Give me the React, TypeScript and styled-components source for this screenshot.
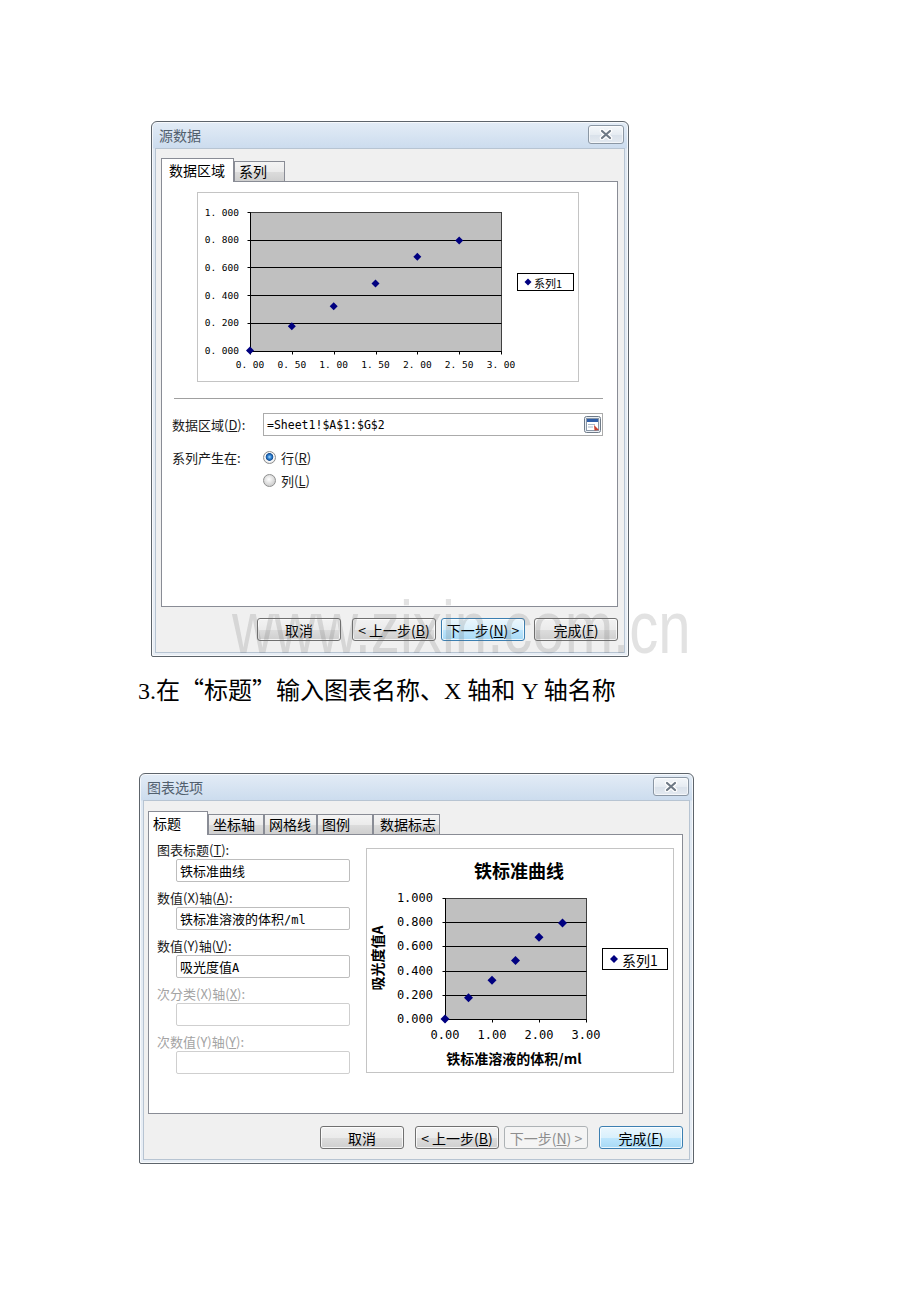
import React from "react";
import styled, { createGlobalStyle, css } from "styled-components";

const CJK = `"Noto Sans CJK SC", "Liberation Sans", sans-serif`;
const MONO = `"DejaVu Sans Mono", "Liberation Mono", monospace`;

const GlobalStyle = createGlobalStyle`
  html, body { margin: 0; padding: 0; background: #ffffff; }
  body { font-family: ${CJK}; color: #000; }
  *, *::before, *::after { box-sizing: border-box; }
`;

/* ---------- page ---------- */

const Page = styled.main`
  position: relative;
  width: 920px;
  height: 1302px;
  padding-top: 121px;
  overflow: hidden;
`;

const Caption = styled.p`
  margin: 16px 0 0 138px;
  font-family: "Liberation Serif", "Noto Sans CJK SC", serif;
  font-size: 24px;
  line-height: 32px;
  white-space: nowrap;
  color: #000;
`;

const Quote = styled.span`
  font-family: "Noto Sans CJK SC", sans-serif;
  font-feature-settings: "fwid";
`;

const Watermark = styled.div`
  position: absolute;
  left: 232px;
  top: 590px;
  font-family: "Liberation Sans", sans-serif;
  font-size: 75px;
  line-height: 1;
  white-space: nowrap;
  color: rgba(110, 110, 110, 0.2);
  transform: scaleX(0.775);
  transform-origin: left top;
  pointer-events: none;
`;

/* ---------- window chrome ---------- */

const Window = styled.section<{ $x: number; $w: number; $h: number }>`
  margin-left: ${(p) => p.$x}px;
  width: ${(p) => p.$w}px;
  height: ${(p) => p.$h}px;
  display: flex;
  flex-direction: column;
  padding: 0 3px 3px;
  border: 1px solid #5d646b;
  border-radius: 6px 6px 2px 2px;
  background: linear-gradient(180deg, #e3ecf6 0px, #ccdcee 26px, #dfe8f2 27px, #e8eef5 100%);
  box-shadow: inset 0 0 0 1px rgba(255, 255, 255, 0.7);
`;

const TitleBar = styled.header`
  height: 26px;
  flex: none;
  display: flex;
  align-items: center;
  justify-content: space-between;
  padding: 0 1px 1px 4px;
`;

const WindowTitle = styled.h1`
  margin: 0;
  font-size: 14px;
  font-weight: normal;
  line-height: 18px;
  color: #52606e;
`;

const CloseButton = styled.button`
  width: 36px;
  height: 19px;
  padding: 0;
  display: flex;
  align-items: center;
  justify-content: center;
  border: 1px solid #8b97a4;
  border-radius: 3px;
  background: linear-gradient(180deg, #f4f7fa 0%, #e6ecf2 50%, #d9e1ea 51%, #e3e9f0 100%);
  box-shadow: inset 0 0 0 1px rgba(255, 255, 255, 0.6);
`;

const CloseGlyph = () => (
  <svg width="16" height="11" viewBox="0 0 16 11">
    <path d="M4 2 L12 9 M12 2 L4 9" stroke="#ffffff" strokeWidth="4.5" strokeLinecap="round" />
    <path d="M4 2 L12 9 M12 2 L4 9" stroke="#6e7985" strokeWidth="2.2" strokeLinecap="round" />
  </svg>
);

const Body = styled.div<{ $pad: string }>`
  flex: 1;
  display: flex;
  flex-direction: column;
  padding: ${(p) => p.$pad};
  background: #f0f0f0;
  border: 1px solid #b7c4d2;
`;

/* ---------- tabs ---------- */

const TabStrip = styled.div`
  position: relative;
  z-index: 1;
  height: 24px;
  margin-bottom: -1px;
  display: flex;
  align-items: flex-end;
`;

const Tab = styled.div<{ $active?: boolean; $w: number; $pl: number }>`
  width: ${(p) => p.$w}px;
  padding-left: ${(p) => p.$pl}px;
  font-size: 14px;
  color: #000;
  border: 1px solid #898c95;
  ${(p) =>
    p.$active
      ? css`
          height: 24px;
          line-height: 22px;
          background: #ffffff;
          border-bottom: none;
        `
      : css`
          height: 21px;
          line-height: 19px;
          background: linear-gradient(180deg, #f4f4f4 0%, #ebebeb 50%, #dcdcdc 51%, #cfcfcf 100%);
        `}
`;

const Panel = styled.div<{ $h: number }>`
  height: ${(p) => p.$h}px;
  flex: none;
  display: flex;
  background: #ffffff;
  border: 1px solid #898c95;
`;

/* ---------- buttons ---------- */

type ButtonKind = "normal" | "focus" | "disabled";

const ButtonRow = styled.div<{ $mt: number }>`
  margin-top: ${(p) => p.$mt}px;
  display: flex;
  justify-content: flex-end;
`;

const Button = styled.button<{ $kind?: ButtonKind; $gap?: number }>`
  width: 84px;
  height: 23px;
  margin-left: ${(p) => p.$gap ?? 0}px;
  padding: 0;
  font-family: ${CJK};
  font-size: 14px;
  line-height: 20px;
  white-space: nowrap;
  border-radius: 3px;
  color: #000;
  border: 1px solid #707070;
  background: linear-gradient(180deg, #f2f2f2 0%, #ebebeb 50%, #dddddd 51%, #cfcfcf 100%);
  box-shadow: inset 0 0 0 1px rgba(255, 255, 255, 0.75);
  ${(p) =>
    p.$kind === "focus" &&
    css`
      border-color: #3c7fb1;
      background: linear-gradient(180deg, #eaf6fd 0%, #d9f0fc 50%, #bee6fd 51%, #a7d9f5 100%);
    `}
  ${(p) =>
    p.$kind === "disabled" &&
    css`
      color: #8d8d8d;
      border-color: #adb2b5;
      background: #f4f4f4;
      box-shadow: none;
    `}
`;

const Key = styled.span`
  text-decoration: underline;
`;

/* ---------- scatter chart ---------- */

type TextSpec = { text: string; x: number; y: number; size: number };

interface ChartSpec {
  width: number;
  height: number;
  plot: { x: number; y: number; w: number; h: number };
  xMax: number;
  xStep: number;
  tickSize: number;
  yLabelRight: number;
  xLabelMid: number;
  fmtY: (v: number) => string;
  fmtX: (v: number) => string;
  marker: number;
  legend: { x: number; y: number; w: number; h: number; size: number; dotX: number; textX: number };
  title?: TextSpec;
  xTitle?: TextSpec;
  yTitle?: TextSpec;
}

const SAMPLES: [number, number][] = [
  [0, 0],
  [0.5, 0.175],
  [1, 0.32],
  [1.5, 0.484],
  [2, 0.676],
  [2.5, 0.794],
];

const diamond = (cx: number, cy: number, r: number) =>
  `M${cx} ${cy - r} L${cx + r} ${cy} L${cx} ${cy + r} L${cx - r} ${cy} Z`;

const ChartFrame = styled.div<{ $w: number; $h: number }>`
  flex: none;
  width: ${(p) => p.$w}px;
  height: ${(p) => p.$h}px;
  background: #ffffff;
  & > svg {
    display: block;
  }
`;

function ScatterChart({ spec }: { spec: ChartSpec }) {
  const { plot } = spec;
  const crisp = (n: number) => Math.round(n) + 0.5;
  const sx = (v: number) => plot.x + (v / spec.xMax) * plot.w;
  const sy = (v: number) => plot.y + (1 - v) * plot.h;
  const yTicks = [0, 0.2, 0.4, 0.6, 0.8, 1];
  const xTicks = Array.from({ length: Math.round(spec.xMax / spec.xStep) + 1 }, (_, i) => i * spec.xStep);
  const left = crisp(plot.x);
  const right = crisp(plot.x + plot.w);
  const top = crisp(plot.y);
  const bottom = crisp(plot.y + plot.h);
  const lg = spec.legend;

  return (
    <ChartFrame $w={spec.width} $h={spec.height}>
      <svg width={spec.width} height={spec.height} viewBox={`0 0 ${spec.width} ${spec.height}`}>
        <rect x="0.5" y="0.5" width={spec.width - 1} height={spec.height - 1} fill="#fff" stroke="#c4c4c4" />
        {spec.title && (
          <text
            x={spec.title.x}
            y={spec.title.y}
            textAnchor="middle"
            fontSize={spec.title.size}
            fontWeight="bold"
            fontFamily={CJK}
          >
            {spec.title.text}
          </text>
        )}
        <rect x={left} y={top} width={right - left} height={bottom - top} fill="#c0c0c0" stroke="#404040" />
        {yTicks.slice(1, -1).map((v) => (
          <line key={`g${v}`} x1={left} x2={right} y1={crisp(sy(v))} y2={crisp(sy(v))} stroke="#000" />
        ))}
        <line x1={left} x2={left} y1={top} y2={bottom} stroke="#000" />
        <line x1={left} x2={right} y1={bottom} y2={bottom} stroke="#000" />
        {yTicks.map((v) => (
          <line key={`yt${v}`} x1={left - 3} x2={left} y1={crisp(sy(v))} y2={crisp(sy(v))} stroke="#000" />
        ))}
        {xTicks.map((v) => (
          <line key={`xt${v}`} x1={crisp(sx(v))} x2={crisp(sx(v))} y1={bottom} y2={bottom + 3} stroke="#000" />
        ))}
        {yTicks.map((v) => (
          <text
            key={`yl${v}`}
            x={spec.yLabelRight}
            y={sy(v)}
            textAnchor="end"
            dominantBaseline="central"
            fontSize={spec.tickSize}
            fontFamily={MONO}
            fill="#000"
          >
            {spec.fmtY(v)}
          </text>
        ))}
        {xTicks.map((v) => (
          <text
            key={`xl${v}`}
            x={sx(v)}
            y={spec.xLabelMid}
            textAnchor="middle"
            dominantBaseline="central"
            fontSize={spec.tickSize}
            fontFamily={MONO}
            fill="#000"
          >
            {spec.fmtX(v)}
          </text>
        ))}
        {SAMPLES.map(([x, y]) => (
          <path key={`p${x}`} d={diamond(sx(x), sy(y), spec.marker)} fill="#000080" />
        ))}
        {spec.xTitle && (
          <text
            x={spec.xTitle.x}
            y={spec.xTitle.y}
            textAnchor="middle"
            fontSize={spec.xTitle.size}
            fontWeight="bold"
            fontFamily={CJK}
          >
            {spec.xTitle.text}
          </text>
        )}
        {spec.yTitle && (
          <text
            transform={`translate(${spec.yTitle.x} ${spec.yTitle.y}) rotate(-90)`}
            textAnchor="middle"
            fontSize={spec.yTitle.size}
            fontWeight="bold"
            fontFamily={CJK}
          >
            {spec.yTitle.text}
          </text>
        )}
        <rect x={lg.x + 0.5} y={lg.y + 0.5} width={lg.w} height={lg.h} fill="#fff" stroke="#000" />
        <path d={diamond(lg.dotX, lg.y + lg.h / 2 + 0.5, spec.marker - 0.5)} fill="#000080" />
        <text
          x={lg.textX}
          y={lg.y + lg.h / 2 + 1}
          dominantBaseline="central"
          fontSize={lg.size}
          fontFamily={CJK}
          fill="#000"
        >
          系列1
        </text>
      </svg>
    </ChartFrame>
  );
}

const sourceChart: ChartSpec = {
  width: 382,
  height: 190,
  plot: { x: 53, y: 20, w: 251, h: 138.5 },
  xMax: 3,
  xStep: 0.5,
  tickSize: 9.5,
  yLabelRight: 42,
  xLabelMid: 172,
  fmtY: (v) => v.toFixed(3).replace(".", ". "),
  fmtX: (v) => v.toFixed(2).replace(".", ". "),
  marker: 4,
  legend: { x: 320, y: 81, w: 56, h: 17, size: 11, dotX: 331, textX: 337 },
};

const optionsChart: ChartSpec = {
  width: 308,
  height: 225,
  plot: { x: 79, y: 50, w: 141, h: 121 },
  xMax: 3,
  xStep: 1,
  tickSize: 12,
  yLabelRight: 67,
  xLabelMid: 187,
  fmtY: (v) => v.toFixed(3),
  fmtX: (v) => v.toFixed(2),
  marker: 4.5,
  legend: { x: 236, y: 100, w: 65, h: 21, size: 14, dotX: 248, textX: 256 },
  title: { text: "铁标准曲线", x: 153, y: 30, size: 18 },
  xTitle: { text: "铁标准溶液的体积/ml", x: 148, y: 216, size: 14 },
  yTitle: { text: "吸光度值A", x: 17, y: 110, size: 14 },
};

/* ---------- source data pane ---------- */

const SourcePane = styled.div`
  flex: 1;
  display: flex;
  flex-direction: column;
  padding: 10px 0 0 0;
`;

const SourcePreview = styled.div`
  margin-left: 35px;
`;

const Rule = styled.hr`
  height: 0;
  margin: 16px 14px 0 12px;
  border: 0;
  border-top: 1px solid #a0a0a0;
  border-bottom: 1px solid #ffffff;
`;

const FieldRow = styled.div`
  margin-top: 13px;
  padding: 0 14px 0 10px;
  display: flex;
  align-items: center;
`;

const FieldLabel = styled.span`
  width: 91px;
  flex: none;
  font-size: 13px;
  line-height: 23px;
  white-space: nowrap;
  color: #1a1a1a;
`;

const RangeInput = styled.div`
  flex: 1;
  height: 23px;
  display: flex;
  align-items: center;
  justify-content: space-between;
  padding: 0 1px 0 3px;
  border: 1px solid #ababab;
  background: #fff;
  font-family: ${MONO};
  font-size: 11.5px;
  color: #000;
`;

const RangeIcon = () => (
  <svg width="17" height="17" viewBox="0 0 17 17">
    <rect x="0.5" y="0.5" width="16" height="16" rx="2" fill="#e9eef4" stroke="#6f7b88" />
    <rect x="2.5" y="2.5" width="12" height="12" fill="#ffffff" stroke="#8a98a8" />
    <rect x="3" y="3" width="11" height="3" fill="#2f5ea8" />
    <path d="M4 8.5 H11 M4 11 H9" stroke="#a9b8c9" />
    <path d="M10 9 L15 14 L10.5 14.5 Z" fill="#c8402e" />
  </svg>
);

const OptionRow = styled.div`
  margin-top: 10px;
  padding-left: 10px;
  display: flex;
  align-items: flex-start;
`;

const RadioList = styled.div`
  display: flex;
  flex-direction: column;
`;

const RadioItem = styled.label`
  height: 23px;
  display: flex;
  align-items: center;
  gap: 5px;
  font-size: 13px;
  color: #1a1a1a;
`;

const RadioDot = styled.span<{ $on?: boolean }>`
  width: 13px;
  height: 13px;
  border-radius: 50%;
  border: 1px solid #8e8f8f;
  background: ${(p) =>
    p.$on
      ? "radial-gradient(circle at 50% 45%, #a9dcff 0px, #2d7fd0 2px, #174f92 3.5px, #ffffff 4.2px, #e6e6e6 6px)"
      : "radial-gradient(circle at 45% 40%, #ffffff 0px, #f0f0f0 2px, #d2d2d2 6px)"};
`;

/* ---------- chart options pane ---------- */

const OptionsPane = styled.div`
  flex: 1;
  display: flex;
  padding: 7px 0 0 8px;
`;

const TitleFields = styled.div`
  width: 209px;
  flex: none;
  display: flex;
  flex-direction: column;
`;

const FieldGroup = styled.div`
  margin-bottom: 8px;
`;

const GroupLabel = styled.div<{ $disabled?: boolean }>`
  height: 16px;
  margin-bottom: 1px;
  font-size: 13px;
  line-height: 16px;
  white-space: nowrap;
  color: ${(p) => (p.$disabled ? "#a3a3a3" : "#1a1a1a")};
`;

const TextBox = styled.div<{ $disabled?: boolean }>`
  width: 174px;
  height: 23px;
  margin-left: 19px;
  padding-left: 3px;
  font-size: 13px;
  line-height: 21px;
  white-space: nowrap;
  color: #000;
  background: #fff;
  border: 1px solid ${(p) => (p.$disabled ? "#cfcfcf" : "#bdbdbd")};
  border-radius: 2px;
`;

const MonoBit = styled.span`
  font-family: ${MONO};
  font-size: 12px;
`;

const OptionsPreview = styled.div`
  margin-top: 6px;
`;

type FieldDef = { label: React.ReactNode; value?: React.ReactNode; disabled?: boolean };

const titleFields: FieldDef[] = [
  { label: <>图表标题(<Key>T</Key>):</>, value: "铁标准曲线" },
  { label: <>数值(X)轴(<Key>A</Key>):</>, value: <>铁标准溶液的体积<MonoBit>/ml</MonoBit></> },
  { label: <>数值(Y)轴(<Key>V</Key>):</>, value: <>吸光度值<MonoBit>A</MonoBit></> },
  { label: <>次分类(X)轴(<Key>X</Key>):</>, disabled: true },
  { label: <>次数值(Y)轴(<Key>Y</Key>):</>, disabled: true },
];

export default function App() {
  return (
    <>
      <GlobalStyle />
      <Page>
        <Window $x={151} $w={478} $h={536}>
          <TitleBar>
            <WindowTitle>源数据</WindowTitle>
            <CloseButton aria-label="关闭">
              <CloseGlyph />
            </CloseButton>
          </TitleBar>
          <Body $pad="9px 6px 0 5px">
            <TabStrip>
              <Tab $active $w={73} $pl={7}>数据区域</Tab>
              <Tab $w={51} $pl={4}>系列</Tab>
            </TabStrip>
            <Panel $h={426}>
              <SourcePane>
                <SourcePreview>
                  <ScatterChart spec={sourceChart} />
                </SourcePreview>
                <Rule />
                <FieldRow>
                  <FieldLabel>
                    数据区域(<Key>D</Key>):
                  </FieldLabel>
                  <RangeInput>
                    <span>=Sheet1!$A$1:$G$2</span>
                    <RangeIcon />
                  </RangeInput>
                </FieldRow>
                <OptionRow>
                  <FieldLabel>系列产生在:</FieldLabel>
                  <RadioList>
                    <RadioItem>
                      <RadioDot $on />
                      <span>
                        行(<Key>R</Key>)
                      </span>
                    </RadioItem>
                    <RadioItem>
                      <RadioDot />
                      <span>
                        列(<Key>L</Key>)
                      </span>
                    </RadioItem>
                  </RadioList>
                </OptionRow>
              </SourcePane>
            </Panel>
            <ButtonRow $mt={11}>
              <Button>取消</Button>
              <Button $gap={11}>&lt; 上一步(<Key>B</Key>)</Button>
              <Button $gap={5} $kind="focus">下一步(<Key>N</Key>) &gt;</Button>
              <Button $gap={9}>完成(<Key>F</Key>)</Button>
            </ButtonRow>
          </Body>
        </Window>

        <Caption>
          3.在<Quote>“</Quote>标题<Quote>”</Quote>输入图表名称、X 轴和 Y 轴名称
        </Caption>

        <Window $x={139} $w={555} $h={391} style={{ marginTop: 66 }}>
          <TitleBar>
            <WindowTitle>图表选项</WindowTitle>
            <CloseButton aria-label="关闭">
              <CloseGlyph />
            </CloseButton>
          </TitleBar>
          <Body $pad="10px 6px 0 4px">
            <TabStrip>
              <Tab $active $w={60} $pl={4}>标题</Tab>
              <Tab $w={56} $pl={4}>坐标轴</Tab>
              <Tab $w={53} $pl={4}>网格线</Tab>
              <Tab $w={56} $pl={4}>图例</Tab>
              <Tab $w={67} $pl={6}>数据标志</Tab>
            </TabStrip>
            <Panel $h={280}>
              <OptionsPane>
                <TitleFields>
                  {titleFields.map((f, i) => (
                    <FieldGroup key={i}>
                      <GroupLabel $disabled={f.disabled}>{f.label}</GroupLabel>
                      <TextBox $disabled={f.disabled}>{f.value}</TextBox>
                    </FieldGroup>
                  ))}
                </TitleFields>
                <OptionsPreview>
                  <ScatterChart spec={optionsChart} />
                </OptionsPreview>
              </OptionsPane>
            </Panel>
            <ButtonRow $mt={12}>
              <Button>取消</Button>
              <Button $gap={11}>&lt; 上一步(<Key>B</Key>)</Button>
              <Button $gap={5} $kind="disabled">下一步(<Key>N</Key>) &gt;</Button>
              <Button $gap={11} $kind="focus">完成(<Key>F</Key>)</Button>
            </ButtonRow>
          </Body>
        </Window>

        <Watermark aria-hidden="true">www.zixin.com.cn</Watermark>
      </Page>
    </>
  );
}
